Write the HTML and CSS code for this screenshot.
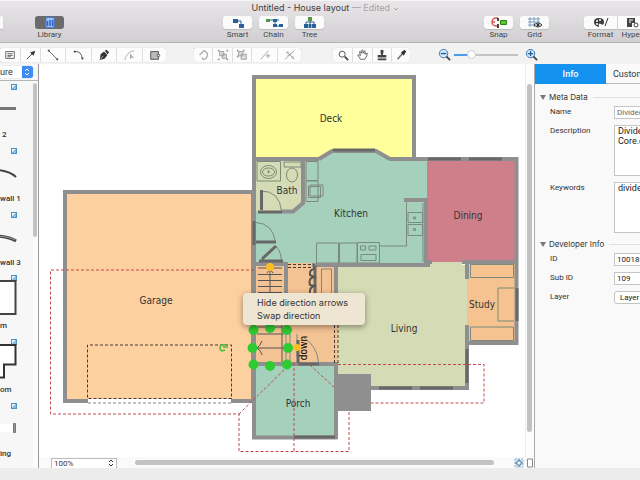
FILE: index.html
```
<!DOCTYPE html>
<html lang="en">
<head>
<meta charset="utf-8">
<title>Untitled - House layout</title>
<link rel="stylesheet" href="styles.css">
</head>
<body>
<div class="app">
  <header class="titlebar">
    <h1 class="title">Untitled - House layout <span class="muted">— Edited <svg width="6" height="4" viewBox="0 0 6 4"><path d="M1 1l2 2 2-2" fill="none" stroke="#a5a3a6"/></svg></span></h1>
    <div class="modes">
      <div class="mode-group start">
        <button class="mode stub" aria-label="Solutions"><span class="face"></span></button>
        <button class="mode active"><span class="face"><svg width="10" height="11" viewBox="0 0 10 11"><path d="M1 .5h8v10H1z" fill="#9cc3f5" stroke="#477fdb"/><path d="M2.500 4v5M5 3v6M7.500 3v6" stroke="#2863cf" stroke-width="1.500"/></svg></span>Library</button>
      </div>
      <div class="mode-group center">
        <button class="mode"><span class="face"><svg width="14" height="10" viewBox="0 0 14 10"><path d="M2 1h5v4H2zM8 6h5v4H8z" fill="#286099"/><path d="M7 3h3v4" fill="none" stroke="#286099"/></svg></span>Smart</button>
        <button class="mode"><span class="face"><svg width="18" height="10" viewBox="0 0 18 10"><path d="M2 2h12M10 2v6h6" fill="none" stroke="#35658d"/><path d="M1 1h4v3H1z" fill="#4f9942"/><path d="M8 1h4v3H8zM8 6h4v3H8zM14 6h4v3h-4z" fill="#286099"/></svg></span>Chain</button>
        <button class="mode"><span class="face"><svg width="14" height="11" viewBox="0 0 14 11"><path d="M3 8V5h8v3M7 3v5" fill="none" stroke="#286099"/><path d="M5 0h4v4H5z" fill="#4f9942"/><path d="M1 7h4v4H1zM5.500 7h3v4h-3zM9 7h4v4H9z" fill="#286099"/></svg></span>Tree</button>
      </div>
      <div class="mode-group snap">
        <button class="mode"><span class="face"><svg width="16" height="11" viewBox="0 0 16 11"><path d="M7 1H5a3.500 3.500 0 000 8h2M1 5h3" fill="none" stroke="#dc5148" stroke-width="1.500"/><path d="M7 1v3M7 7v4" stroke="#444" stroke-width="2"/><path d="M9.500 3.500h6v4h-6z" fill="#56ca25" stroke="#31801c"/></svg></span>Snap</button>
        <button class="mode"><span class="face"><svg width="16" height="11" viewBox="0 0 16 11"><path d="M1 2h12M1 5h12M1 8h8M3 0v10M7 0v10M11 0v6" stroke="#7b9cc2"/><path d="M7 8q4-4 8 0-4 4-8 0z" fill="#fff" stroke="#333"/><circle cx="11" cy="8" r="1.500" fill="#333"/></svg></span>Grid</button>
      </div>
      <div class="mode-group end">
        <button class="mode wide"><span class="face left"><svg width="16" height="11" viewBox="0 0 16 11"><path d="M1 5q0-4 5-4t5 4-3 2-2 3Q1 9 1 5z" fill="#3c3c3c"/><circle cx="4" cy="4" r="1" fill="#fff"/><circle cx="7" cy="3" r="1" fill="#fff"/><circle cx="4" cy="7" r="1" fill="#fff"/><path d="M12 9l3-8" stroke="#333"/></svg></span>Format</button>
        <button class="mode wide"><span class="face right"><svg width="13" height="11" viewBox="0 0 13 11"><path d="M1 1h8v5H6v4H1z" fill="#444"/><path d="M3 3h4M3 5h2" stroke="#fff"/><circle cx="10" cy="8" r="2" fill="none" stroke="#444"/></svg></span>Hyper</button>
      </div>
    </div>
  </header>

  <div class="toolbar" role="toolbar" aria-label="Drawing tools">
    <div class="tools draw">
      <button aria-label="Text box"><svg viewBox="0 0 14 14"><path d="M2 3h10v8H2zM4 5.500h6M4 7.500h6M4 9h4" fill="none" stroke="#555"/></svg></button>
      <button aria-label="Arrow"><svg viewBox="0 0 14 14"><path d="M2 12l8-8" stroke="#333"/><path d="M12 2l-2 6-4-4z" fill="#333"/></svg></button>
      <button aria-label="Line"><svg viewBox="0 0 14 14"><path d="M2 2l10 10" stroke="#555"/><path d="M1 1h2v2H1zM11 11h2v2h-2z" fill="#444"/></svg></button>
      <button aria-label="Arc"><svg viewBox="0 0 14 14"><path d="M2 3q8-1 9 9" fill="none" stroke="#444"/><path d="M1 2h2v2H1zM10 10h2v2h-2z" fill="#444"/></svg></button>
      <button aria-label="Pen"><svg viewBox="0 0 14 14"><path d="M2 13l1-7 4-3 4 4-3 4zM8 2l2-1 3 3-2 2z" fill="#333"/><path d="M2 13l4-5" stroke="#bbb"/></svg></button>
      <button aria-label="Edit points"><svg viewBox="0 0 14 14"><path d="M1 13Q3 3 12 2" fill="none" stroke="#aaa"/><path d="M7 5v7l2-2 3 1z" fill="#aaa"/></svg></button>
      <button aria-label="Connection point"><svg viewBox="0 0 14 14"><path d="M2 3h9v9H2z" fill="#bbb" stroke="#444"/><circle cx="11" cy="7.500" r="1.500" fill="#eee" stroke="#444"/></svg></button>
    </div>
    <div class="tools edit">
      <button aria-label="Rotate"><svg viewBox="0 0 14 14"><path d="M3 7l5-5q5 2 4 6t-5 4l-1-2" fill="none" stroke="#aaa" stroke-width="1.500"/></svg></button>
      <button aria-label="Group"><svg viewBox="0 0 14 14"><path d="M3 3h5v5H3zM6 6h5v5H6z" fill="#ddd" stroke="#999"/><path d="M1 1h2v2H1zM11 1h2v2h-2zM1 11h2v2H1zM11 11h2v2h-2z" fill="#999"/></svg></button>
      <button aria-label="Ungroup"><svg viewBox="0 0 14 14"><path d="M3 3h5v5H3zM6 6h6v6H6z" fill="#ddd" stroke="#999"/><path d="M1 1h2v2H1zM8 1h2v2H8zM1 8h2v2H1z" fill="#999"/></svg></button>
      <button aria-label="Add point"><svg viewBox="0 0 14 14"><path d="M2 12l9-10M8 8h5M10.500 5.500v5" stroke="#999"/></svg></button>
      <button aria-label="Cut connector"><svg viewBox="0 0 14 14"><path d="M1 12L12 2M4 4l8 8M4 8l5-3" stroke="#999"/><circle cx="10" cy="10" r="1.500" fill="#bbb"/><circle cx="4" cy="4" r="1.500" fill="#bbb"/></svg></button>
    </div>
    <div class="tools view">
      <button aria-label="Magnify"><svg viewBox="0 0 14 14"><circle cx="6" cy="6" r="3.500" fill="none" stroke="#444"/><path d="M9 9l4 4" stroke="#444" stroke-width="2"/></svg></button>
      <button aria-label="Pan"><svg viewBox="0 0 14 14"><path d="M4 12L1 7q2-1 3 1L3 3q1-1 2 2l1-4q2 0 1 4l2-3q1 1 0 4l3-1q0 3-3 7z" fill="#fff" stroke="#555"/></svg></button>
      <button aria-label="Stamp"><svg viewBox="0 0 14 14"><path d="M5 2q2-2 4 0L8 7h4v3H2V7h4zM2 11h10v2H2z" fill="#444"/></svg></button>
      <button aria-label="Eyedropper"><svg viewBox="0 0 14 14"><path d="M3 12l6-7" stroke="#777" stroke-width="2"/><path d="M7 4l4-3 2 2-3 5z" fill="#333"/></svg></button>
    </div>
    <div class="zoom">
      <button aria-label="Zoom out"><svg viewBox="0 0 14 14"><circle cx="6" cy="6" r="4.500" fill="#d9ecfc" stroke="#3773ac"/><path d="M3 6h6" stroke="#225f9c" stroke-width="1.500"/><path d="M9 9l4 4" stroke="#444" stroke-width="2"/></svg></button>
      <input type="range" min="0" max="100" value="24" aria-label="Zoom">
      <button aria-label="Zoom in"><svg viewBox="0 0 14 14"><circle cx="6" cy="6" r="4.500" fill="#d9ecfc" stroke="#3773ac"/><path d="M3 6h6M6 3v6" stroke="#225f9c" stroke-width="1.500"/><path d="M9 9l4 4" stroke="#444" stroke-width="2"/></svg></button>
    </div>
  </div>

  <main class="workspace">
    <aside class="library">
      <div class="lib-head"><select aria-label="Library category"><option>ure</option></select></div>
      <div class="lib-body">
        <ul class="shapes">
          <li><input type="checkbox" aria-label="Wall 2" checked><svg viewBox="0 0 20 28"><path d="M-5 12.500h21" stroke="#777" stroke-width="3"/></svg><span class="indent">2</span></li>
          <li><input type="checkbox" aria-label="Curved wall 1" checked><svg viewBox="0 0 20 28"><path d="M-2 10Q10 11 16 17" fill="none" stroke="#444" stroke-width="2"/></svg><span>wall 1</span></li>
          <li><input type="checkbox" aria-label="Curved wall 3" checked><svg viewBox="0 0 20 28"><path d="M-2 12Q10 13 16 17" fill="none" stroke="#444" stroke-width="3"/><path d="M-2 12Q10 13 15 16" fill="none" stroke="#999"/></svg><span>wall 3</span></li>
          <li><input type="checkbox" aria-label="Room" checked><svg viewBox="0 0 20 40"><path d="M-2 1h17.500v33H-2" fill="#fff" stroke="#444" stroke-width="2"/></svg><span>m</span></li>
          <li><input type="checkbox" aria-label="L room" checked><svg viewBox="0 0 20 40"><path d="M-2 1h17.500v19.500H4v13H-2" fill="#fff" stroke="#333" stroke-width="2"/></svg><span>om</span></li>
          <li><input type="checkbox" aria-label="Opening" checked><svg viewBox="0 0 20 28"><path d="M0 9h13v8H0z" fill="#fff"/><path d="M13.500 8.500h2v9h-2z" fill="#999" stroke="#777"/></svg><span>ing</span></li>
        </ul>
        <div class="lib-scroll"><div class="thumb"></div></div>
      </div>
    </aside>

    <section class="document">
      <div class="canvas-row">
        <div class="canvas">
          <svg class="plan" viewBox="39 64 486 393" role="img" aria-label="House floor plan">
            <g class="rooms">
              <path d="M254 77h160v82H254z" fill="#ffff9c"/>
              <path d="M65 192h188v207H65z" fill="#fdd0a0"/>
              <path d="M254 159h65l13-8h44l14 8h37v106H254z" fill="#a5d0bb"/>
              <path d="M427 159h89v103h-89z" fill="#cf7f8a"/>
              <path d="M254 263h83v101h-83z" fill="#f4c394"/>
              <path d="M337 265h91v-3h34v3h5v123H337z" fill="#d5dbb4"/>
              <path d="M467 263h50v80h-50z" fill="#f5c290"/>
              <path d="M254 364h81v73h-81z" fill="#a5d0bb"/>
              <path d="M256 161h46v42l-9 8h-37z" fill="#d5dbb4"/>
            </g>
            <g class="fixtures">
              <path d="M257 161.500h23.500v19.500H257zM284 162h17v5h-17zM306 161.500h12v19h-12zM306 181h12v20.500h-12zM310 185h13v11h-13zM308.500 186.500h12v11h-12z"/>
              <ellipse cx="268.500" cy="172" rx="8" ry="6.500"/><ellipse cx="268.500" cy="172" rx="6" ry="4"/><path d="M267 172h3m-1.500-2v3"/>
              <ellipse cx="292" cy="175" rx="5.500" ry="7"/>
              <path d="M261.500 191q18 0 20 20M256 222.500q17 1 19.500 20M276 246q6 7 5 16"/>
              <path d="M316.500 243h22v20h-22zM339.500 243H357v20h-17.500zM357.500 242.500h22v20.500h-22zM360.500 246h5v4h-5zM369 246h7v4h-7zM361 254.500h15v6h-15z"/>
              <path d="M380 246h26.500v-43.500M423 203v59M408 212.500h14.500v10H408zM408 224.500h14.500v11H408zM413.500 217h2v2h-2zM413.500 228.500h2v2h-2z"/>
              <path d="M470.500 264.500h43v13h-43zM470.500 327h43v13.500h-43zM514 288h-16v33h16"/>
              <path d="M321.500 269h10v26h-10zM282 334h8v30M286 334v13h6M286 347v16M297 357v-23M304 338q13 8 14.500 24"/>
            </g>
            <path class="stairs" d="M258 268h24M258 274.500h24M258 280.500h24M258 286.500h24M258 292.500h24M270 269v24M267 273l3-4 3 4M257 334h25M284 348h-27M262 341q-2 5-5 7 4 2 5 7M282 325v38M257 327h25"/>
            <g class="walls">
              <path d="M319 159h-65V77h160v82M254 156v108"/>
              <path d="M88 401H65V192h188v209h-22"/>
              <path d="M319 159l13-8h44l14 8h126.500v184H466M467 262v17M467 325v63h-96M518 262h-56M432 262h-4v3H337M404 200h22v65"/>
              <path d="M303 160v43l-10 8.500h-12M254 262v101M254 264h32v30M336 264v30M286 264h-20M312 265h26M282 364h54"/>
              <path d="M252 364h84v75M254 362v75.500h83"/>
            </g>
            <path d="M334 374h37v37h-37z" fill="#8f8f8f"/>
            <path class="dark" d="M333 150h42M428 159h33M469 159h33M379 388h33M420 388h33M467 349v34M517 288v33M294 437h41M258 212h24M261.500 190v20M254 221v24M256 242h20M262 259l14-13M259 261h24M315 265v29M298 364h21M298 340v23"/>
            <path class="squiggle" d="M314 269q-5 1-4 6l4 2q-6 1-4 8l4 1q-5 2-4 7"/>
            <path class="dash" d="M231.500 398.500H87.500V345h144v54M288 264.500h26M288 267.500h26M334.500 325v39M338 325v39"/>
            <path class="dash gray" d="M88 403h143"/>
            <path class="dash red" d="M254 270H50.500v144H239v37.500h110V411M239 414l50-49M294 363v88M310 365l25 23M338 364.500h146v38.500H371"/>
            <g class="labels">
              <text x="331" y="122">Deck</text><text x="287" y="194">Bath</text><text x="351" y="217">Kitchen</text>
              <text x="468" y="219">Dining</text><text x="156" y="304">Garage</text><text x="482" y="308">Study</text>
              <text x="404" y="332">Living</text><text x="298" y="407">Porch</text>
              <text class="down" transform="translate(307 348) rotate(-90)">down</text>
            </g>
            <g fill="#2fcb32"><circle cx="253.500" cy="330" r="5"/><circle cx="270" cy="328" r="5"/><circle cx="287" cy="330" r="5"/><circle cx="252.500" cy="348" r="5"/><circle cx="288" cy="348" r="5"/><circle cx="253.500" cy="364.500" r="5"/><circle cx="270" cy="366" r="5"/><circle cx="287" cy="364.500" r="5"/></g>
            <g fill="#fbbd20"><circle cx="270" cy="267" r="4"/><circle cx="297" cy="347.500" r="3.500"/></g>
            <path d="M225 345q-5-1-5 3t5 2M223 347h5" fill="none" stroke="#45be3b" stroke-width="1.500"/>
          </svg>
          <div class="menu" role="menu">
            <button role="menuitem">Hide direction arrows</button>
            <button role="menuitem">Swap direction</button>
          </div>
        </div>
        <div class="vscroll"><div class="thumb"></div></div>
      </div>
      <div class="statusbar">
        <div class="percent"><select aria-label="Zoom level"><option>100%</option></select><svg width="6" height="8" viewBox="0 0 6 8"><path d="M1 3l2-2 2 2M1 5l2 2 2-2" fill="none" stroke="#333"/></svg></div>
        <div class="hscroll"><div class="thumb"></div></div>
        <button aria-label="Fit page"><svg width="20" height="10" viewBox="0 0 20 10"><path d="M1 1h8v8H1z" fill="#e7f1fa" stroke="#8fb0cf" stroke-dasharray="2 1"/><path d="M5 1v8M1 5h8" stroke="#477fae"/><path d="M3 3h4v4H3z" fill="#fff" stroke="#477fae"/><path d="M13.500 1h5v8h-5z" fill="#fff" stroke="#888"/></svg></button>
      </div>
    </section>

    <aside class="inspector">
      <div class="tabs"><button class="selected">Info</button><button>Custom</button></div>
      <form class="fields">
        <h2><svg width="6" height="5" viewBox="0 0 6 5"><path d="M0 0h6L3 5z" fill="#777"/></svg>Meta Data</h2>
        <label for="name">Name</label><input id="name" type="text" class="soft" value="Divided">
        <label for="desc">Description</label><textarea id="desc">Divided
Core.d</textarea>
        <label for="keys">Keywords</label><textarea id="keys">divided</textarea>
        <h2><svg width="6" height="5" viewBox="0 0 6 5"><path d="M0 0h6L3 5z" fill="#777"/></svg>Developer Info</h2>
        <label for="id">ID</label><input id="id" type="text" value="100182">
        <label for="subid">Sub ID</label><input id="subid" type="text" value="109">
        <label for="layer">Layer</label><select id="layer"><option>Layer</option></select>
      </form>
    </aside>
  </main>
  <footer class="footer"></footer>
</div>
</body>
</html>
```
FILE: styles.css
```
* { box-sizing: border-box; }
body { margin: 0; font: 8px/10px Roboto, "Liberation Sans", sans-serif; color: #333; }
button, input, select, textarea { font: inherit; color: inherit; margin: 0; padding: 0; border: 0; background: none; appearance: none; border-radius: 0; }
svg { display: block; flex: none; }

.app { display: flex; flex-direction: column; min-height: 100vh; overflow: hidden; }

.titlebar { height: 43px; background: linear-gradient(#e9e6e9, #d2cfd2); border-top: 1px solid #f5f4f5; border-bottom: 1px solid #b5b3b5; overflow: hidden; }
.title { margin: 0; height: 15px; font-family: Inter, sans-serif; font-size: 9px; line-height: 14px; font-weight: 400; text-align: center; color: #3d3b3d; padding-left: 10px; }
.muted { color: #a5a3a6; }
.title svg { display: inline-block; }
.modes { display: flex; }
.mode-group { display: flex; gap: 7px; }
.mode { width: 29px; display: flex; flex-direction: column; align-items: center; gap: 1px; color: #444; white-space: nowrap; }
.face { width: 100%; height: 13px; display: flex; align-items: center; justify-content: center; background: #fbfbfb; border-radius: 3px; box-shadow: 0 1px 1px #bbb; }
.active .face { background: #6c6a6c; box-shadow: none; }
.start { gap: 32px; flex: 1; }
.stub { width: 3px; }
.center { margin-right: 160px; }
.snap { margin-right: 35px; }
.end { gap: 1px; width: 56px; }
.wide { width: 33px; flex: none; }
.face.left { border-radius: 3px 0 0 3px; }
.face.right { border-radius: 0; }
.wide:last-child { width: 28px; }

.toolbar { height: 21px; display: flex; align-items: center; background: #f2f2f2; padding-bottom: 1px; padding-top: 3px; }
.tools { display: grid; height: 14px; background: #fcfcfc; border-radius: 3px; box-shadow: 0 0 1px #bbb; }
.tools button { display: flex; justify-content: center; align-items: center; }
.tools button + button { border-left: 1px solid #dedede; }
.tools svg { width: 12px; height: 12px; }
.draw { grid-template-columns: 20px 20px 25px 26px 25px 26px 24px; margin-right: 28px; }
.edit { grid-template-columns: 18px 20px 19px 26px 24px; margin-right: 32px; }
.view { grid-template-columns: 19px 20px 19px 19px; }
.zoom { display: flex; align-items: center; gap: 3px; margin-left: 28px; }
.zoom svg { width: 13px; height: 13px; }
.zoom input { width: 64px; height: 10px; margin-right: 4px; }
.zoom input::-webkit-slider-runnable-track { height: 2px; background: linear-gradient(to right, #4b9de9 24%, #c3c3c3 24%); }
.zoom input::-webkit-slider-thumb { appearance: none; width: 9px; height: 9px; margin-top: -4px; border-radius: 50%; background: #fff; border: 1px solid #ccc; }

.workspace { flex: 1; display: flex; min-height: 0; }
.library { width: 39px; border-right: 1px solid #999; background: #f7f7f7; display: flex; flex-direction: column; }
.lib-head { height: 17px; padding-top: 2px; border-bottom: 1px solid #b5b5b5; }
.lib-head select { width: 33px; height: 12px; border-radius: 0 3px 3px 0; background: url("data:image/svg+xml,%3Csvg xmlns='http://www.w3.org/2000/svg' width='11' height='12'%3E%3Crect width='11' height='12' fill='%233b8cf5'/%3E%3Cpath d='M3 5l2-2 2 2M3 7l2 2 2-2' fill='none' stroke='white'/%3E%3C/svg%3E") right no-repeat #fff; box-shadow: 0 0 1px #999; font-size: 9px; line-height: 12px; }
.lib-body { flex: 1; display: flex; }
.shapes { flex: 1; margin: 0; padding: 0 0 4px; list-style: none; display: grid; grid-template-rows: repeat(6, 1fr); }
.shapes li { display: grid; grid-template-rows: 9px 38px 11px; padding-top: 3px; overflow: hidden; align-content: start; }
.shapes input { width: 6px; height: 6px; margin-left: 11px; border: 1px solid #4b94c4; background: linear-gradient(135deg, #e3f3fc 50%, #8abce0 50%); }
.shapes svg { width: 20px; margin-top: 2px; }
.shapes svg[viewBox="0 0 20 28"] { margin-top: 3px; }
.shapes svg[viewBox="0 0 20 40"] { margin-top: -4px; }
.shapes span { font-weight: 500; line-height: 8px; }
.indent { padding-left: 2px; }
.lib-scroll { width: 5px; padding-top: 2px; background: #fcfcfc; }
.lib-scroll .thumb { width: 4px; height: 40%; background: #c2c2c2; }
.thumb { border-radius: 3px; background: #c2c2c2; }

.document { flex: 1; min-width: 0; display: flex; flex-direction: column; background: #fff; }
.canvas-row { flex: 1; display: flex; min-height: 0; }
.canvas { flex: 1; min-width: 0; position: relative; }
.plan { width: 100%; height: 100%; }
.vscroll { width: 9px; border-left: 1px solid #eee; background: #fcfcfc; padding: 20px 2px 25px 1px; display: flex; }
.vscroll .thumb { flex: 1; }
.statusbar { height: 11px; display: flex; align-items: center; background: #fafafa; padding-left: 12px; }
.percent { width: 66px; height: 10px; display: flex; align-items: center; border: 1px solid #bbb; border-bottom: 0; background: #fff; padding: 0 2px; }
.percent select { flex: 1; font-size: 8px; line-height: 9px; }
.hscroll { flex: 1; padding: 0 20px 0 18px; }
.hscroll .thumb { height: 5px; }

.walls path { fill: none; stroke: #8f8f8f; stroke-width: 4; }
.fixtures { fill: none; stroke: #7b8a7a; }
.stairs { fill: none; stroke: #555; }
.dark { fill: none; stroke: #686868; stroke-width: 3; }
.squiggle { fill: none; stroke: #555; stroke-width: 2; }
.dash { fill: none; stroke: #443a32; stroke-dasharray: 3 2; }
.dash.gray { stroke: #888; }
.dash.red { stroke: #c04a4a; }
.labels text { font: 10px "DejaVu Sans Condensed", "DejaVu Sans", sans-serif; fill: #333; text-anchor: middle; }
.labels .down { fill: #000; }

.menu { position: absolute; left: 204px; top: 229px; width: 122px; padding: 3px 0; display: flex; flex-direction: column; background: #efe5d3; border-radius: 4px; box-shadow: 0 2px 6px #0006; }
.menu button { height: 13px; padding-left: 14px; text-align: left; font-family: Inter, sans-serif; font-size: 9px; white-space: nowrap; }

.inspector { width: 106px; border-left: 1px solid #aaa; background: #f9f9f9; overflow: hidden; }
.tabs { display: flex; height: 20px; }
.tabs button { flex: 1; font-size: 9px; text-align: left; padding-left: 7px; border-bottom: 1px solid #bbb; background: #fafafa; }
.tabs .selected { flex: none; width: 71px; background: #1592ef; color: #fff; text-align: center; padding: 0; border: 0; font-weight: 500; }
.fields { display: grid; grid-template-columns: 64px 60px; row-gap: 6px; padding: 8px 0 0 15px; align-items: start; }
.fields h2 { grid-column: 1 / -1; margin: 0 0 -2px -10px; font-family: Inter, sans-serif; font-size: 8px; line-height: 10px; font-weight: 400; display: flex; align-items: center; gap: 3px; }
.fields h2::after { content: ""; flex: 1; height: 1px; margin-left: 2px; background: #e2e2e2; }
.fields label { line-height: 12px; }
.fields input, .fields textarea, .fields select { width: 60px; border: 1px solid #c5c5c5; background: #fff; padding: 0 2px; color: #222; }
.fields input, .fields select { height: 13px; }
.fields textarea { height: 51px; resize: none; overflow: hidden; padding: 0 3px; font-size: 9px; display: block; }
.fields select { border-radius: 3px; padding-left: 5px; }
.fields .soft { color: #666; }

.footer { height: 13px; background: #ececec; }
```
